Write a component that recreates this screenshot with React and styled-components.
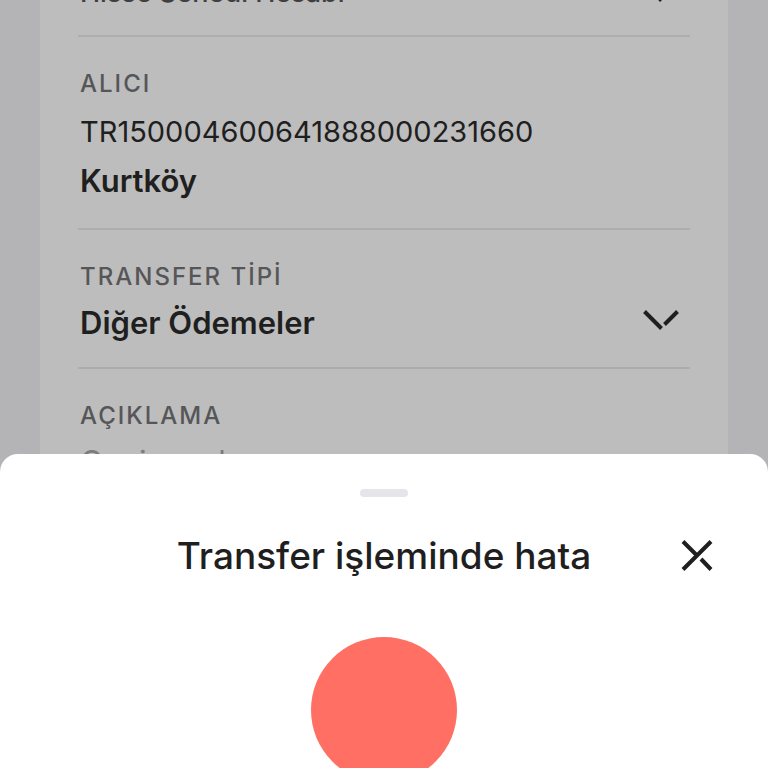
import styled, { createGlobalStyle } from "styled-components";

const GlobalStyle = createGlobalStyle`
  * {
    box-sizing: border-box;
  }
  body {
    margin: 0;
    color: #1f1f1f;
    background-color: #b4b4b7;
    font-family: Inter, "Open Sans", sans-serif;
  }
`;

const Screen = styled.div`
  position: relative;
  height: 100vh;
  overflow: hidden;
  padding: 0 40px;
`;

/* the form is scrolled, so its first field is cut by the top edge */
const Card = styled.form`
  min-height: 100%;
  margin-top: -98px;
  padding: 0 38px;
  background-color: #bdbdbd;
`;

const Field = styled.div`
  display: flex;
  flex-direction: column;
  gap: 9px;
  padding: 33px 2px 23px;
  border-bottom: 2px solid #adadad;
`;

const Label = styled.label`
  color: #565658;
  font-size: 24px;
  font-weight: 500;
  line-height: 28px;
  letter-spacing: 2px;
`;

const Recipient = styled.div`
  line-height: 49px;

  .iban {
    font-size: 29px;
  }
  .name {
    font-size: 31px;
    font-weight: 600;
  }
`;

const SelectBox = styled.div`
  display: grid;
  grid-template-columns: 1fr 36px;
  padding-right: 9px;
`;

const Select = styled.select`
  grid-area: 1 / 1 / 2 / 3;
  width: 100%;
  height: ${(props) => (props.$muted ? 40 : 44)}px;
  padding: 0;
  border: none;
  appearance: none;
  background: transparent;
  color: ${(props) => (props.$muted ? "#3f3f41" : "#1f1f1f")};
  font-family: inherit;
  font-size: ${(props) => (props.$muted ? 27 : 31)}px;
  font-weight: ${(props) => (props.$muted ? 500 : 600)};
`;

const Chevron = styled.svg`
  grid-area: 1 / 2 / 2 / 3;
  width: 36px;
  height: 24px;
  margin-top: 8px;
  pointer-events: none;
`;

const Input = styled.input`
  width: 100%;
  height: 44px;
  padding: 0;
  border: none;
  background: transparent;
  font-family: inherit;
  font-size: 31px;

  &::placeholder {
    color: #7c7c7e;
    opacity: 1;
  }
`;

const Sheet = styled.section`
  position: absolute;
  left: 0;
  right: 0;
  bottom: 0;
  display: flex;
  flex-direction: column;
  align-items: center;
  padding-top: 35px;
  border-radius: 18px 18px 0 0;
  background-color: #fff;
`;

const Handle = styled.div`
  width: 48px;
  height: 8px;
  border-radius: 4px;
  background-color: #e5e5ea;
`;

const SheetHeader = styled.header`
  display: grid;
  grid-template-columns: 44px 1fr 44px;
  align-items: center;
  width: 100%;
  margin-top: 37px;
  padding: 0 49px;
`;

const Title = styled.h2`
  grid-column: 2;
  margin: 0;
  font-size: 37px;
  font-weight: 500;
  line-height: 44px;
  text-align: center;
`;

const CloseButton = styled.button`
  width: 44px;
  height: 44px;
  padding: 0;
  border: none;
  background: transparent;
  cursor: pointer;

  svg {
    display: block;
  }
`;

const Illustration = styled.div`
  height: 131px;
  margin-top: 59px;
  overflow: hidden;
`;

const Circle = styled.div`
  width: 146px;
  height: 146px;
  border-radius: 50%;
  background-color: #ff6f63;
`;

function SelectField({ id, label, value, muted }) {
  return (
    <Field>
      <Label htmlFor={id}>{label}</Label>
      <SelectBox>
        <Select id={id} $muted={muted}>
          <option>{value}</option>
        </Select>
        <Chevron viewBox="0 0 36 24" fill="none" stroke="#1f1f1f" strokeWidth="4">
          <path d="M1.5 3.5L18.5 20.5M21.5 16.5L34.5 3.5" />
        </Chevron>
      </SelectBox>
    </Field>
  );
}

export default function App() {
  return (
    <>
      <GlobalStyle />
      <Screen>
        <Card>
          <SelectField id="account" label="HESAP" value="Hisse Senedi Hesabı" muted />
          <Field>
            <Label as="div">ALICI</Label>
            <Recipient>
              <div className="iban">TR150004600641888000231660</div>
              <div className="name">Kurtköy</div>
            </Recipient>
          </Field>
          <SelectField id="type" label="TRANSFER TİPİ" value="Diğer Ödemeler" />
          <Field>
            <Label htmlFor="note">AÇIKLAMA</Label>
            <Input id="note" type="text" placeholder="Opsiyonel" />
          </Field>
        </Card>

        <Sheet role="dialog" aria-labelledby="sheet-title">
          <Handle />
          <SheetHeader>
            <Title id="sheet-title">Transfer işleminde hata</Title>
            <CloseButton type="button" aria-label="Kapat">
              <svg width="44" height="44" viewBox="0 0 44 44" fill="none" stroke="#1f1f1f" strokeWidth="4">
                <path d="M36 7.5L8 35.5M8 7.5L21.5 21M26 25L36 35.5" />
              </svg>
            </CloseButton>
          </SheetHeader>
          <Illustration>
            <Circle />
          </Illustration>
        </Sheet>
      </Screen>
    </>
  );
}
